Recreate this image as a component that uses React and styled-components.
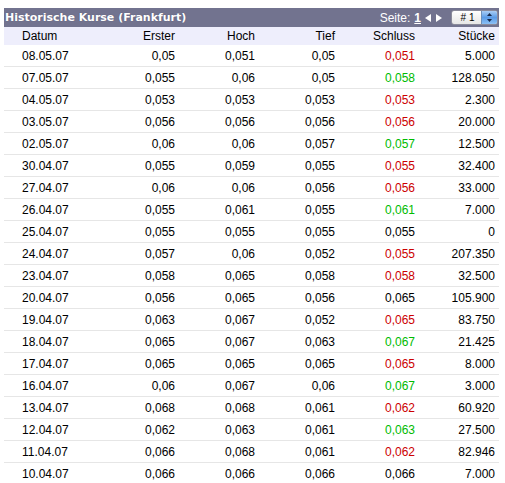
import React from "react";
import styled, { createGlobalStyle } from "styled-components";

const Global = createGlobalStyle`
  html, body { margin: 0; padding: 0; background: #fff; }
  body { font-family: "Liberation Sans", Arial, sans-serif; }
`;

const Page = styled.div`
  padding: 8px 6px 0 4px;
  width: 495px;
`;

const TitleBar = styled.div`
  height: 19px;
  background: #72738f;
  display: flex;
  align-items: center;
  justify-content: space-between;
  color: #fff;
`;

const Title = styled.div`
  font-family: "DejaVu Sans", Verdana, sans-serif;
  font-weight: bold;
  font-size: 11px;
  padding-left: 1px;
  text-shadow: 0 0 1px rgba(40, 40, 70, 0.4);
`;

const Pager = styled.div`
  display: flex;
  align-items: center;
  font-size: 12px;
  padding-right: 1px;
`;

const PageNum = styled.span`
  font-weight: bold;
  text-decoration: underline;
  margin-left: 4px;
`;

const Arrows = styled.svg`
  margin-left: 4px;
  margin-right: 9px;
`;

const Select = styled.div`
  width: 45px;
  height: 13px;
  border: 1px solid #8a8a9a;
  border-radius: 3px;
  background: linear-gradient(#ffffff, #e6e6e6);
  display: flex;
  overflow: hidden;
`;

const SelectLabel = styled.div`
  flex: 1;
  font-size: 10px;
  color: #000;
  display: flex;
  align-items: center;
  justify-content: center;
  padding-left: 2px;
`;

const Stepper = styled.div`
  width: 15px;
  background: linear-gradient(#a9cdf5, #5b9be6 50%, #8cc0f5);
  border-left: 1px solid #6d8fb8;
  display: flex;
  align-items: center;
  justify-content: center;
`;

const HeaderRow = styled.div`
  display: grid;
  grid-template-columns: 95px repeat(5, 80px);
  height: 18px;
  align-items: center;
  background: #eeeefc;
  font-size: 12px;
  color: #000;
`;

const Row = styled.div`
  display: grid;
  grid-template-columns: 95px repeat(5, 80px);
  height: 21px;
  align-items: center;
  border-bottom: 1px solid #e6e6e6;
  font-size: 12px;
  color: #000;
`;

const Cell = styled.div`
  text-align: ${(p) => (p.$left ? "left" : "right")};
  padding-left: ${(p) => (p.$left ? "18px" : "0")};
  padding-right: ${(p) => (p.$left ? "0" : "4px")};
  color: ${(p) => (p.$tone === "r" ? "#cc0000" : p.$tone === "g" ? "#00bb00" : "#000")};
`;

const rows = [
  ["08.05.07", "0,05", "0,051", "0,05", "0,051", "r", "5.000"],
  ["07.05.07", "0,055", "0,06", "0,05", "0,058", "g", "128.050"],
  ["04.05.07", "0,053", "0,053", "0,053", "0,053", "r", "2.300"],
  ["03.05.07", "0,056", "0,056", "0,056", "0,056", "r", "20.000"],
  ["02.05.07", "0,06", "0,06", "0,057", "0,057", "g", "12.500"],
  ["30.04.07", "0,055", "0,059", "0,055", "0,055", "r", "32.400"],
  ["27.04.07", "0,06", "0,06", "0,056", "0,056", "r", "33.000"],
  ["26.04.07", "0,055", "0,061", "0,055", "0,061", "g", "7.000"],
  ["25.04.07", "0,055", "0,055", "0,055", "0,055", "", "0"],
  ["24.04.07", "0,057", "0,06", "0,052", "0,055", "r", "207.350"],
  ["23.04.07", "0,058", "0,065", "0,058", "0,058", "r", "32.500"],
  ["20.04.07", "0,056", "0,065", "0,056", "0,065", "", "105.900"],
  ["19.04.07", "0,063", "0,067", "0,052", "0,065", "r", "83.750"],
  ["18.04.07", "0,065", "0,067", "0,063", "0,067", "g", "21.425"],
  ["17.04.07", "0,065", "0,065", "0,065", "0,065", "r", "8.000"],
  ["16.04.07", "0,06", "0,067", "0,06", "0,067", "g", "3.000"],
  ["13.04.07", "0,068", "0,068", "0,061", "0,062", "r", "60.920"],
  ["12.04.07", "0,062", "0,063", "0,061", "0,063", "g", "27.500"],
  ["11.04.07", "0,066", "0,068", "0,061", "0,062", "r", "82.946"],
  ["10.04.07", "0,066", "0,066", "0,066", "0,066", "", "7.000"],
];

export default function App() {
  return (
    <>
      <Global />
      <Page>
        <TitleBar>
          <Title>Historische Kurse (Frankfurt)</Title>
          <Pager>
            <span>Seite:</span>
            <PageNum>1</PageNum>
            <Arrows width="17" height="8" viewBox="0 0 17 8">
              <polygon points="6,0 6,8 0,4" fill="#fff" />
              <polygon points="11,0 11,8 17,4" fill="#fff" />
            </Arrows>
            <Select>
              <SelectLabel># 1</SelectLabel>
              <Stepper>
                <svg width="5" height="9" viewBox="0 0 5 9">
                  <polygon points="2.5,0 5,3 0,3" fill="#1a2a4a" />
                  <polygon points="0,6 5,6 2.5,9" fill="#1a2a4a" />
                </svg>
              </Stepper>
            </Select>
          </Pager>
        </TitleBar>
        <HeaderRow>
          <Cell $left>Datum</Cell>
          <Cell>Erster</Cell>
          <Cell>Hoch</Cell>
          <Cell>Tief</Cell>
          <Cell>Schluss</Cell>
          <Cell>Stücke</Cell>
        </HeaderRow>
        {rows.map((r) => (
          <Row key={r[0]}>
            <Cell $left>{r[0]}</Cell>
            <Cell>{r[1]}</Cell>
            <Cell>{r[2]}</Cell>
            <Cell>{r[3]}</Cell>
            <Cell $tone={r[5]}>{r[4]}</Cell>
            <Cell>{r[6]}</Cell>
          </Row>
        ))}
      </Page>
    </>
  );
}
